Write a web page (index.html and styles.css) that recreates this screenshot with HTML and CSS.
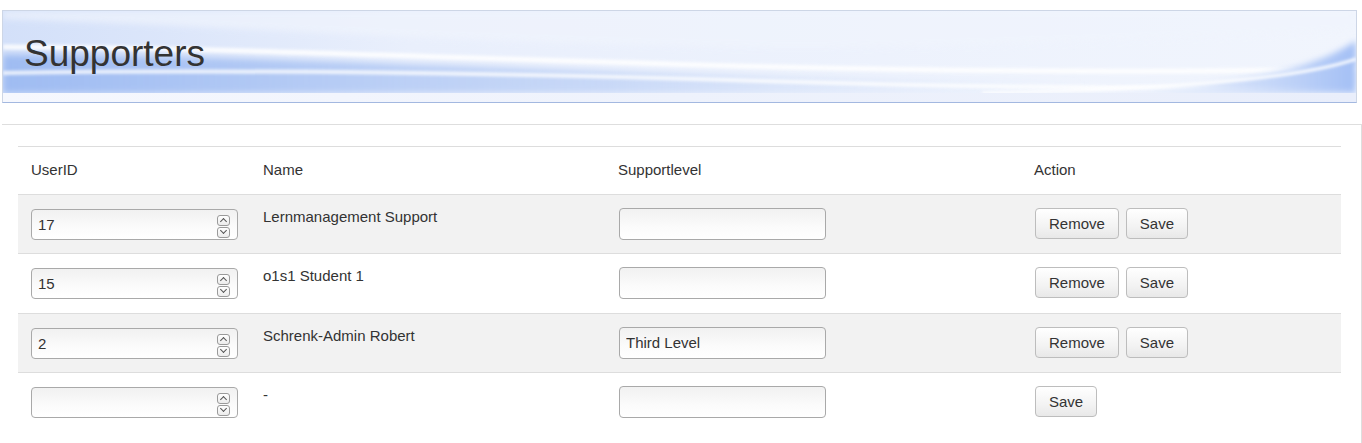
FILE: index.html
```html
<!DOCTYPE html>
<html>
<head>
<meta charset="utf-8">
<title>Supporters</title>
<link rel="stylesheet" href="styles.css">
</head>
<body>
<div class="banner">
  <svg class="banner-bg" viewBox="0 0 1354 82" preserveAspectRatio="none" aria-hidden="true">
    <defs>
      <linearGradient id="base" x1="0" y1="0" x2="1" y2="0">
        <stop offset="0" stop-color="#d3e0f9"/>
        <stop offset="0.3" stop-color="#e9effc"/>
        <stop offset="1" stop-color="#f1f5fd"/>
      </linearGradient>
      <linearGradient id="blueL" x1="0" y1="0" x2="1" y2="0">
        <stop offset="0" stop-color="#9fbcf2" stop-opacity="1"/>
        <stop offset="0.45" stop-color="#b2c9f4" stop-opacity="0.6"/>
        <stop offset="0.8" stop-color="#d6e2f9" stop-opacity="0"/>
      </linearGradient>
      <linearGradient id="blueR" x1="1" y1="0" x2="0" y2="0">
        <stop offset="0" stop-color="#a3bff5" stop-opacity="1"/>
        <stop offset="0.6" stop-color="#c4d6f8" stop-opacity="0.4"/>
        <stop offset="1" stop-color="#e8eefb" stop-opacity="0"/>
      </linearGradient>
      <filter id="soft" x="-10%" y="-50%" width="120%" height="200%">
        <feGaussianBlur stdDeviation="3"/>
      </filter>
      <filter id="soft2" x="-10%" y="-50%" width="120%" height="200%">
        <feGaussianBlur stdDeviation="1.5"/>
      </filter>
    </defs>
    <rect x="0" y="0" width="1354" height="82" fill="url(#base)"/>
    <path d="M0 8 C200 14 420 30 700 36 C900 40 1100 30 1354 20 L1354 0 L0 0 Z" fill="#f0f4fd" opacity="0.7" filter="url(#soft)"/>
    <path d="M0 44 C250 44 500 58 800 66 C1000 72 1200 70 1354 66 L1354 82 L0 82 Z" fill="url(#blueL)" filter="url(#soft)"/>
    <path d="M0 36 C200 36 420 46 700 54 C950 61 1150 62 1354 58" stroke="#ffffff" stroke-width="5" fill="none" opacity="0.85" filter="url(#soft2)"/>
    <path d="M0 62 C250 58 500 62 760 70 C950 76 1150 78 1354 76" stroke="#ffffff" stroke-width="4" fill="none" opacity="0.8" filter="url(#soft2)"/>
    <path d="M1060 82 C1200 78 1300 66 1354 30 L1354 82 Z" fill="url(#blueR)" filter="url(#soft)"/>
    <path d="M980 82 C1150 78 1290 70 1354 48" stroke="#ffffff" stroke-width="3" fill="none" opacity="0.9" filter="url(#soft2)"/>
  </svg>
  <h1 class="banner-title">Supporters</h1>
  <div class="banner-strip"></div>
</div>

<div class="panel">
  <table class="grid">
    <colgroup>
      <col class="c-id">
      <col class="c-name">
      <col class="c-level">
      <col class="c-action">
    </colgroup>
    <thead>
      <tr>
        <th>UserID</th>
        <th>Name</th>
        <th>Supportlevel</th>
        <th>Action</th>
      </tr>
    </thead>
    <tbody>
      <tr class="odd">
        <td>
          <div class="numbox"><input class="numval" type="text" value="17"><span class="spin"><span class="sb up"></span><span class="sb down"></span></span></div>
        </td>
        <td class="name">Lernmanagement Support</td>
        <td><input class="field" type="text" value=""></td>
        <td><div class="actions"><button class="btn">Remove</button><button class="btn">Save</button></div></td>
      </tr>
      <tr class="tall">
        <td>
          <div class="numbox"><input class="numval" type="text" value="15"><span class="spin"><span class="sb up"></span><span class="sb down"></span></span></div>
        </td>
        <td class="name">o1s1 Student 1</td>
        <td><input class="field" type="text" value=""></td>
        <td><div class="actions"><button class="btn">Remove</button><button class="btn">Save</button></div></td>
      </tr>
      <tr class="odd">
        <td>
          <div class="numbox"><input class="numval" type="text" value="2"><span class="spin"><span class="sb up"></span><span class="sb down"></span></span></div>
        </td>
        <td class="name">Schrenk-Admin Robert</td>
        <td><input class="field" type="text" value="Third Level"></td>
        <td><div class="actions"><button class="btn">Remove</button><button class="btn">Save</button></div></td>
      </tr>
      <tr class="tall">
        <td>
          <div class="numbox"><input class="numval" type="text" value=""><span class="spin"><span class="sb up"></span><span class="sb down"></span></span></div>
        </td>
        <td class="name">-</td>
        <td><input class="field" type="text" value=""></td>
        <td><div class="actions"><button class="btn">Save</button></div></td>
      </tr>
    </tbody>
  </table>
</div>
</body>
</html>
```
FILE: styles.css
```css
* { box-sizing: border-box; }
html, body { margin: 0; padding: 0; background: #fff; }
body {
  font-family: "Liberation Sans", Arial, Helvetica, sans-serif;
  font-size: 15px;
  color: #333;
  width: 1362px;
}

.banner {
  position: relative;
  margin: 10px 5px 0 2px;
  height: 93px;
  border: 1px solid #cdd6e6;
  border-bottom-color: #a3b8e0;
  overflow: hidden;
  display: flex;
  flex-direction: column;
}
.banner-bg {
  position: absolute;
  left: 0;
  top: 0;
  width: 100%;
  height: 82px;
  z-index: 0;
}
.banner-title {
  position: relative;
  z-index: 1;
  margin: 0;
  height: 82px;
  padding: 23px 0 0 21px;
  font-family: "Liberation Sans", Arial, Helvetica, sans-serif;
  font-weight: normal;
  font-size: 37px;
  line-height: 40px;
  color: #333;
}
.banner-strip {
  position: relative;
  z-index: 1;
  flex: 1;
  background: linear-gradient(to right, #f6f8fe 0%, #eef2fc 50%, #e9eefb 100%);
}

.panel {
  margin: 21px 0 0 2px;
  border-top: 1px solid #dedede;
  border-right: 1px solid #dedede;
  padding: 21px 20px 30px 16px;
}

.grid {
  width: 1323px;
  border-collapse: collapse;
  table-layout: fixed;
}
.c-id { width: 232px; }
.c-name { width: 355px; }
.c-level { width: 416px; }
.c-action { width: 320px; }

.grid th {
  text-align: left;
  font-weight: normal;
  color: #333;
  line-height: 20px;
  padding: 13px 13px 14px 13px;
  border-top: 1px solid #dddddd;
}
.grid td {
  border-top: 1px solid #dddddd;
  padding: 14px 13px 13px 13px;
  vertical-align: top;
  line-height: 20px;
}
.grid tr.tall td { padding-bottom: 14px; }
.grid tr.odd td { background: #f2f2f2; }
.grid td.name {
  padding-top: 12px;
  color: #333;
}

.numbox {
  display: flex;
  align-items: center;
  width: 207px;
  height: 31px;
  border: 1px solid #a9a9a9;
  border-radius: 4px;
  background: linear-gradient(to bottom, #f1f1f1 0%, #fbfbfb 60%, #ffffff 100%);
  padding-right: 7px;
}
.numval {
  flex: 1;
  min-width: 0;
  border: 0;
  background: transparent;
  font-family: "Liberation Sans", Arial, Helvetica, sans-serif;
  font-size: 15px;
  color: #333;
  padding: 0 0 1px 6px;
  height: 29px;
  outline: none;
}
.spin {
  display: flex;
  flex-direction: column;
  gap: 1px;
  margin-top: 3px;
}
.sb {
  position: relative;
  display: block;
  width: 13px;
  height: 11px;
  border: 1px solid #9a9a9a;
  border-radius: 3px;
  background: linear-gradient(to bottom, #ffffff, #ececec);
}
.sb::after {
  content: "";
  position: absolute;
  left: 3px;
  width: 4px;
  height: 4px;
  border-left: 1.3px solid #555;
  border-top: 1.3px solid #555;
}
.sb.up::after { top: 3px; transform: rotate(45deg); }
.sb.down::after { top: 0px; transform: rotate(225deg); }

.field {
  display: block;
  width: 207px;
  height: 32px;
  margin: -1px 0 0 1px;
  border: 1px solid #a9a9a9;
  border-radius: 4px;
  background: linear-gradient(to bottom, #f1f1f1 0%, #fbfbfb 60%, #ffffff 100%);
  font-family: "Liberation Sans", Arial, Helvetica, sans-serif;
  font-size: 15px;
  color: #333;
  padding: 0 6px 1px 6px;
  outline: none;
}

.actions {
  display: flex;
  gap: 7px;
  margin-left: 1px;
  margin-top: -1px;
}
.btn {
  height: 31px;
  padding: 0 13px;
  border: 1px solid #bdbdbd;
  border-radius: 4px;
  background: linear-gradient(to bottom, #ffffff 0%, #f3f3f3 60%, #e8e8e8 100%);
  font-family: "Liberation Sans", Arial, Helvetica, sans-serif;
  font-size: 15px;
  color: #333;
  cursor: pointer;
}
```
